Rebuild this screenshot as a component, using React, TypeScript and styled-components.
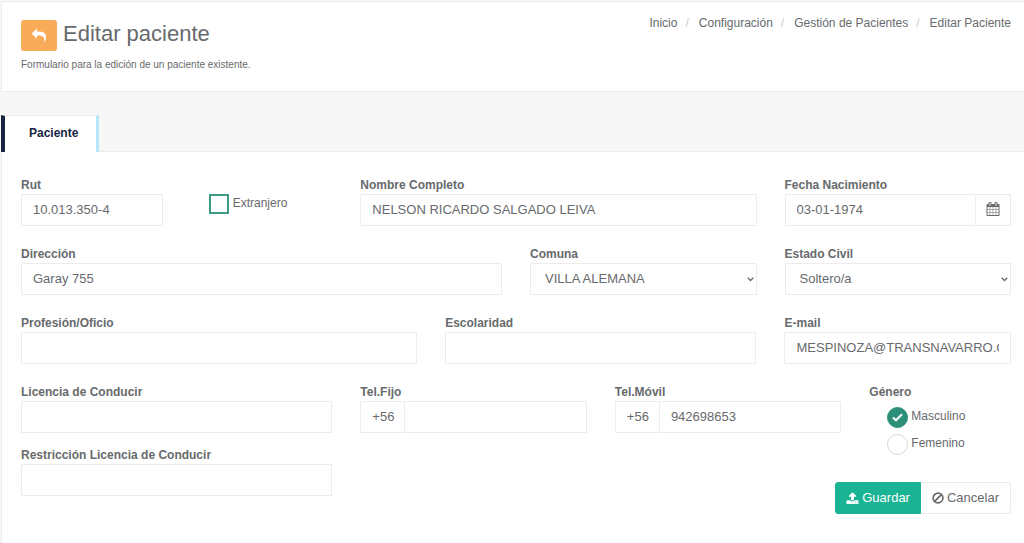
import React from "react";
import styled, { createGlobalStyle, css } from "styled-components";

const GlobalStyle = createGlobalStyle`
  *, *::before, *::after { box-sizing: border-box; }
  body {
    margin: 0;
    background: #f7f7f7;
    color: #676a6c;
    font-family: "Liberation Sans", Arial, sans-serif;
    font-size: 12px;
    line-height: 18px;
  }
  #root { min-height: 100vh; display: flex; flex-direction: column; }
`;

const line = "#ececec";

const Page = styled.div`
  flex: 1;
  display: flex;
  flex-direction: column;
  padding: 1px 0 0 1px;
`;

const Header = styled.header`
  display: flex;
  justify-content: space-between;
  align-items: flex-start;
  padding: 12px 13px 17px 19px;
  background: #fff;
  border: 1px solid ${line};
  border-right: 0;
`;

const Heading = styled.div`
  display: flex;
  align-items: flex-start;
  gap: 6px;
  padding-top: 6px;
`;

const BackButton = styled.button`
  display: flex;
  align-items: center;
  justify-content: center;
  width: 36px;
  height: 31px;
  padding: 0;
  border: 0;
  border-radius: 3px;
  background: #f8ac59;
  color: #fff;
`;

const Title = styled.h1`
  margin: 0;
  font-size: 22px;
  font-weight: 400;
  line-height: 28px;
`;

const Subtitle = styled.p`
  margin: 5px 0 0;
  font-size: 10px;
`;

const Crumbs = styled.ol`
  display: flex;
  margin: 0;
  padding: 0;
  list-style: none;
`;

const Crumb = styled.li`
  & + &::before {
    content: "/";
    padding: 0 10px 0 8px;
    color: #ccc;
  }
`;

const CrumbLink = styled.a`
  color: inherit;
  text-decoration: none;
`;

const Tabs = styled.div`
  display: flex;
  margin-top: 23px;
`;

const Tab = styled.button`
  height: 37px;
  margin-bottom: -1px;
  padding: 0 18px 2px 24px;
  border: 0;
  border-top: 1px solid ${line};
  border-left: 4px solid #172542;
  border-right: 3px solid #b8e6fb;
  background: #fff;
  color: #172542;
  font: inherit;
  font-weight: 700;
  z-index: 1;
`;

const Panel = styled.form`
  flex: 1;
  padding: 24px 13px 28px 19px;
  background: #fff;
  border-top: 1px solid ${line};
  border-left: 1px solid ${line};
`;

const Row = styled.div`
  display: grid;
  grid-template-columns: repeat(12, minmax(0, 1fr));
  gap: 27px 28px;
  margin-bottom: 19px;
  &:last-child { margin-bottom: 0; }
`;

const Cell = styled.div<{ $span: number; $rows?: number }>`
  grid-column: span ${(p) => p.$span};
  grid-row: span ${(p) => p.$rows ?? 1};
  min-width: 0;
`;

const Stack = styled(Cell)`
  display: flex;
  flex-direction: column;
  gap: 13px;
`;

const FieldLabel = styled.label`
  display: block;
  font-weight: 700;
`;

const control = css`
  width: 100%;
  height: 32px;
  border: 1px solid ${line};
  border-radius: 1px;
  background: #fff;
  color: inherit;
  font: inherit;
  font-size: 13px;
`;

const Input = styled.input`
  ${control}
  padding: 0 11px 2px;
`;

const SelectBox = styled.div`
  position: relative;
  & > svg {
    position: absolute;
    right: 3px;
    top: 14px;
    pointer-events: none;
  }
`;

const Select = styled.select`
  ${control}
  appearance: none;
  padding: 0 14px;
`;

const Group = styled.div`
  display: flex;
  & > input { flex: 1; min-width: 0; }
`;

const Prefix = styled.span`
  display: flex;
  align-items: center;
  padding: 0 10px 0 11px;
  border: 1px solid ${line};
  border-right: 0;
  font-size: 13px;
`;

const DateButton = styled.button`
  display: flex;
  align-items: center;
  justify-content: center;
  width: 35px;
  padding: 0 0 2px;
  border: 1px solid ${line};
  border-left: 0;
  background: #fff;
  color: inherit;
`;

const CheckLabel = styled.label`
  display: flex;
  align-items: flex-start;
  gap: 4px;
  padding: 18px 0 0 18px;
`;

const Checkbox = styled.input`
  appearance: none;
  width: 20px;
  height: 20px;
  margin: 0;
  border: 2px solid #3d9b84;
  background: #fff;
  &:checked { background: #3d9b84; }
`;

const Gender = styled.fieldset`
  margin: 0;
  padding: 0;
  border: 0;
`;

const Legend = styled.legend`
  padding: 0;
  font-weight: 700;
`;

const Options = styled.div`
  display: flex;
  flex-direction: column;
  gap: 6px;
  padding: 6px 0 0 18px;
`;

const RadioLabel = styled.label`
  display: flex;
  align-items: flex-start;
  gap: 3px;
  height: 21px;
`;

const RadioMark = styled.span`
  display: grid;
  & > * { grid-area: 1 / 1; place-self: center; }
  & > svg { color: #fff; pointer-events: none; z-index: 1; }
`;

const Radio = styled.input`
  appearance: none;
  width: 21px;
  height: 21px;
  margin: 0;
  border: 1px solid #d6d6d0;
  border-radius: 50%;
  background: #fff;
  &:checked { background: #2b8f79; border-color: #2b8f79; }
`;

const Actions = styled(Cell)`
  display: flex;
  justify-content: flex-end;
  align-items: flex-start;
`;

const ActionButton = styled.button<{ $primary?: boolean }>`
  display: flex;
  align-items: center;
  gap: 3px;
  height: 32px;
  padding: ${(p) => (p.$primary ? "0 10px" : "0 11px")};
  border: 1px solid ${(p) => (p.$primary ? "#1ab394" : line)};
  border-radius: ${(p) => (p.$primary ? "3px 0 0 3px" : "0 3px 3px 0")};
  border-left-width: ${(p) => (p.$primary ? 1 : 0)}px;
  background: ${(p) => (p.$primary ? "#1ab394" : "#fff")};
  color: ${(p) => (p.$primary ? "#fff" : "inherit")};
  font: inherit;
  font-size: 13px;
`;

const paths = {
  reply:
    "M1792 1120q0 166-127 451-3 7-10.500 24t-13.500 30-13 22q-12 17-28 17-15 0-23.500-10t-8.500-25q0-9 2.500-26.500t2.500-23.500q5-68 5-123 0-112-19.500-200.500t-54-153.500-89-111.500-112-77.500-135-47.500-148.500-22.500-160-5.500h-224v256q0 26-19 45t-45 19-45-19l-512-512q-19-19-19-45t19-45l512-512q19-19 45-19t45 19 19 45v256h224q713 0 875 403 53 134 53 333z",
  calendar:
    "M192 1664h288v-288h-288v288zm352 0h320v-288h-320v288zm-352-352h288v-320h-288v320zm352 0h320v-320h-320v320zm-352-384h288v-288h-288v288zm736 736h320v-288h-320v288zm-384-736h320v-288h-320v288zm768 736h288v-288h-288v288zm-384-352h320v-320h-320v320zm-352-864v-288q0-13-9.500-22.500t-22.500-9.500h-64q-13 0-22.500 9.500t-9.500 22.500v288q0 13 9.500 22.500t22.500 9.500h64q13 0 22.500-9.500t9.500-22.500zm736 864h288v-320h-288v320zm-384-384h320v-288h-320v288zm384 0h288v-288h-288v288zm32-480v-288q0-13-9.500-22.500t-22.500-9.500h-64q-13 0-22.500 9.500t-9.500 22.500v288q0 13 9.500 22.500t22.500 9.500h64q13 0 22.500-9.500t9.500-22.500zm384-64v1280q0 52-38 90t-90 38h-1408q-52 0-90-38t-38-90v-1280q0-52 38-90t90-38h128v-96q0-66 47-113t113-47h64q66 0 113 47t47 113v96h384v-96q0-66 47-113t113-47h64q66 0 113 47t47 113v96h128q52 0 90 38t38 90z",
  upload:
    "M1344 1472q0-26-19-45t-45-19-45 19-19 45 19 45 45 19 45-19 19-45zm256 0q0-26-19-45t-45-19-45 19-19 45 19 45 45 19 45-19 19-45zm128-224v320q0 40-28 68t-68 28h-1472q-40 0-68-28t-28-68v-320q0-40 28-68t68-28h427q21 56 70.500 92t110.500 36h256q61 0 110.500-36t70.500-92h427q40 0 68 28t28 68zm-325-648q-17 40-59 40h-256v448q0 26-19 45t-45 19h-256q-26 0-45-19t-19-45v-448h-256q-42 0-59-40-17-39 14-69l448-448q18-19 45-19t45 19l448 448q31 30 14 69z",
};

function Glyph({ name, size = 14 }: { name: keyof typeof paths; size?: number }) {
  return (
    <svg width={size} height={size} viewBox="0 0 1792 1792" fill="currentColor" aria-hidden="true">
      <path d={paths[name]} />
    </svg>
  );
}

function BanGlyph() {
  return (
    <svg width="12" height="12" viewBox="0 0 12 12" fill="none" stroke="currentColor" strokeWidth="1.7" aria-hidden="true">
      <circle cx="6" cy="6" r="4.900" />
      <path d="M9.400 2.600 2.600 9.400" />
    </svg>
  );
}

function TickGlyph() {
  return (
    <svg width="11" height="9" viewBox="0 0 11 9" fill="none" stroke="currentColor" strokeWidth="2" aria-hidden="true">
      <path d="M1 4.500 4 7.300 10 1.300" />
    </svg>
  );
}

function ChevronGlyph() {
  return (
    <svg width="7" height="5" viewBox="0 0 7 5" fill="none" stroke="currentColor" strokeWidth="1.3" aria-hidden="true">
      <path d="M0.700 0.700 3.500 3.500 6.300 0.700" />
    </svg>
  );
}

type TextFieldProps = { id: string; label: string; value?: string; type?: string };

function TextField({ id, label, value = "", type = "text" }: TextFieldProps) {
  return (
    <div>
      <FieldLabel htmlFor={id}>{label}</FieldLabel>
      <Input id={id} type={type} defaultValue={value} />
    </div>
  );
}

function SelectField({ id, label, option }: { id: string; label: string; option: string }) {
  return (
    <Cell $span={3}>
      <FieldLabel htmlFor={id}>{label}</FieldLabel>
      <SelectBox>
        <Select id={id}>
          <option>{option}</option>
        </Select>
        <ChevronGlyph />
      </SelectBox>
    </Cell>
  );
}

function PhoneField({ id, label, value = "" }: { id: string; label: string; value?: string }) {
  return (
    <Cell $span={3}>
      <FieldLabel htmlFor={id}>{label}</FieldLabel>
      <Group>
        <Prefix>+56</Prefix>
        <Input id={id} type="tel" defaultValue={value} />
      </Group>
    </Cell>
  );
}

function GenderOption({ label, checked }: { label: string; checked?: boolean }) {
  return (
    <RadioLabel>
      <RadioMark>
        <Radio type="radio" name="genero" defaultChecked={checked} />
        {checked && <TickGlyph />}
      </RadioMark>
      {label}
    </RadioLabel>
  );
}

const crumbs = ["Inicio", "Configuración", "Gestión de Pacientes", "Editar Paciente"];

export default function App() {
  return (
    <Page>
      <GlobalStyle />
      <Header>
        <div>
          <Heading>
            <BackButton type="button" aria-label="Volver">
              <Glyph name="reply" />
            </BackButton>
            <Title>Editar paciente</Title>
          </Heading>
          <Subtitle>Formulario para la edición de un paciente existente.</Subtitle>
        </div>
        <nav>
          <Crumbs>
            {crumbs.map((c) => (
              <Crumb key={c}>
                <CrumbLink href="#">{c}</CrumbLink>
              </Crumb>
            ))}
          </Crumbs>
        </nav>
      </Header>
      <Tabs role="tablist">
        <Tab type="button" role="tab" aria-selected="true">Paciente</Tab>
      </Tabs>
      <Panel>
        <Row>
          <Cell $span={2}>
            <TextField id="rut" label="Rut" value="10.013.350-4" />
          </Cell>
          <Cell $span={2}>
            <CheckLabel>
              <Checkbox type="checkbox" />
              Extranjero
            </CheckLabel>
          </Cell>
          <Cell $span={5}>
            <TextField id="nombre" label="Nombre Completo" value="NELSON RICARDO SALGADO LEIVA" />
          </Cell>
          <Cell $span={3}>
            <FieldLabel htmlFor="fecha">Fecha Nacimiento</FieldLabel>
            <Group>
              <Input id="fecha" defaultValue="03-01-1974" />
              <DateButton type="button" aria-label="Abrir calendario">
                <Glyph name="calendar" />
              </DateButton>
            </Group>
          </Cell>
        </Row>
        <Row>
          <Cell $span={6}>
            <TextField id="direccion" label="Dirección" value="Garay 755" />
          </Cell>
          <SelectField id="comuna" label="Comuna" option="VILLA ALEMANA" />
          <SelectField id="estado" label="Estado Civil" option="Soltero/a" />
        </Row>
        <Row>
          <Cell $span={5}>
            <TextField id="profesion" label="Profesión/Oficio" />
          </Cell>
          <Cell $span={4}>
            <TextField id="escolaridad" label="Escolaridad" />
          </Cell>
          <Cell $span={3}>
            <TextField id="email" label="E-mail" type="email" value="MESPINOZA@TRANSNAVARRO.CL" />
          </Cell>
        </Row>
        <Row>
          <Stack $span={4} $rows={2}>
            <TextField id="licencia" label="Licencia de Conducir" />
            <TextField id="restriccion" label="Restricción Licencia de Conducir" />
          </Stack>
          <PhoneField id="fijo" label="Tel.Fijo" />
          <PhoneField id="movil" label="Tel.Móvil" value="942698653" />
          <Cell $span={2}>
            <Gender>
              <Legend>Género</Legend>
              <Options>
                <GenderOption label="Masculino" checked />
                <GenderOption label="Femenino" />
              </Options>
            </Gender>
          </Cell>
          <Actions $span={8}>
            <ActionButton type="submit" $primary>
              <Glyph name="upload" size={13} />
              Guardar
            </ActionButton>
            <ActionButton type="button">
              <BanGlyph />
              Cancelar
            </ActionButton>
          </Actions>
        </Row>
      </Panel>
    </Page>
  );
}
